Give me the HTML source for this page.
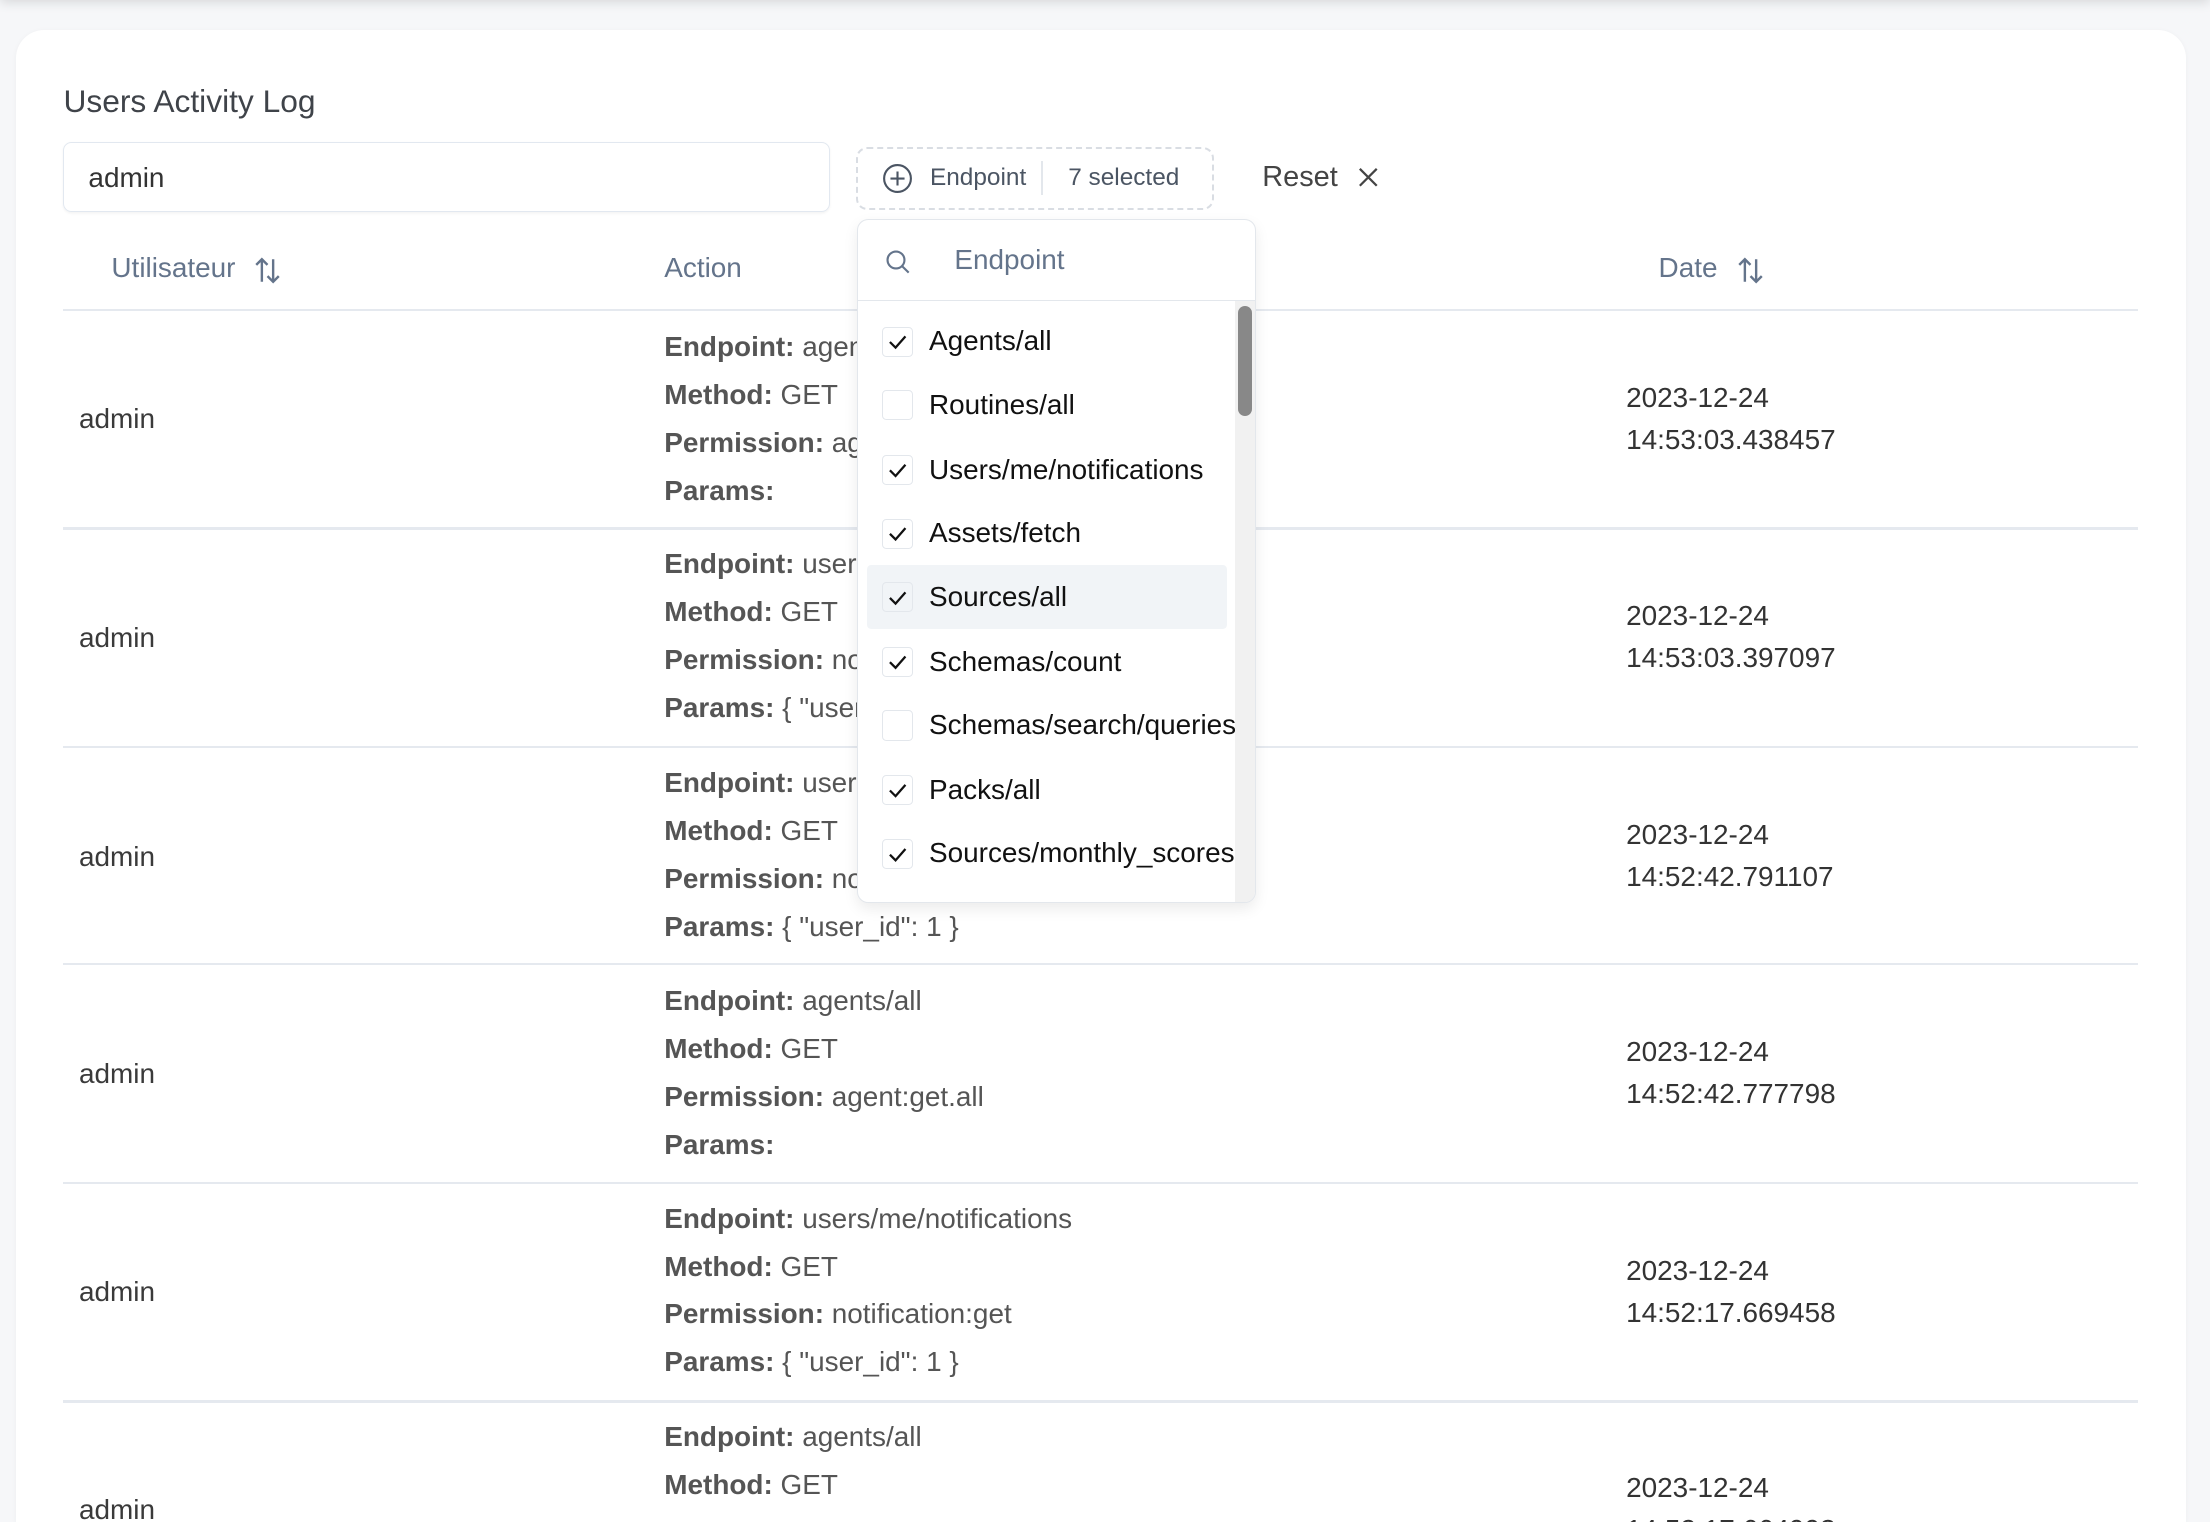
<!DOCTYPE html>
<html><head><meta charset="utf-8"><style>
html,body{margin:0;padding:0;}
body{width:2210px;height:1522px;overflow:hidden;background:#f6f7f9;font-family:"Liberation Sans",Arial,sans-serif;}
#w{zoom:1.41034;width:1567px;height:1079px;position:relative;overflow:hidden;}
.topbar{position:absolute;left:0;top:-20px;width:1567px;height:20px;background:#fff;box-shadow:0 2px 8px rgba(0,0,0,.12);}
.card{position:absolute;left:11px;top:21px;width:1539px;height:1058px;background:#fff;border-radius:20px 20px 0 0;box-shadow:0 1px 4px rgba(0,0,0,.04);}
.abs{position:absolute;white-space:nowrap;}
.title{left:45px;top:59px;font-size:22.5px;color:#3f4349;}
.input{left:45px;top:101px;width:542px;height:48px;border:1px solid #e2e8f0;border-radius:6px;box-shadow:0 1px 2px rgba(0,0,0,.05);}
.input span{position:absolute;left:17px;top:13px;font-size:19.8px;color:#333;}
.btn{left:607px;top:104px;width:251px;height:42px;border:1.5px dashed #d9dde3;border-radius:8px;font-size:17.3px;color:#4b5563;}
.hdr{font-size:19.8px;color:#64748b;top:179px;}
.line{position:absolute;left:45px;width:1471px;height:1.5px;background:#e5e9ef;}
.user{font-size:19.8px;color:#3a3a3a;left:56px;}
.act{left:471px;font-size:19.8px;color:#555;line-height:34px;}
.act b{color:#555;}
.date{left:1153px;font-size:19.8px;color:#333;line-height:30px;}
.dd{left:608px;top:155px;width:281px;height:484px;background:#fff;border:1px solid #e3e7ec;border-radius:8px;box-shadow:0 4px 10px rgba(0,0,0,.08);overflow:hidden;}
.item{position:absolute;left:0;width:267px;height:45px;overflow:hidden;}
.cb{position:absolute;left:17px;top:12px;width:20px;height:20px;border:1px solid #e3e7ec;border-radius:3px;background:#fff;}
.item .t{position:absolute;left:50px;top:11px;font-size:19.8px;color:#111;white-space:nowrap;}
</style></head><body><div id="w">
<div class="topbar"></div>
<div class="card"></div>
<div class="abs title">Users Activity Log</div>
<div class="abs input"><span>admin</span></div>
<div class="abs btn">
 <svg style="position:absolute;left:17px;top:10px" width="22" height="22" viewBox="0 0 22 22" fill="none" stroke="#4b5563" stroke-width="1.5"><circle cx="11" cy="11" r="9.5"/><path d="M11 6v10M6 11h10"/></svg>
 <span style="position:absolute;left:51px;top:11px">Endpoint</span>
 <span style="position:absolute;left:130px;top:9px;width:1px;height:24px;background:#e3e7ec"></span>
 <span style="position:absolute;left:149px;top:11px">7 selected</span>
</div>
<div class="abs" style="left:895px;top:114px;font-size:20.5px;color:#444">Reset</div>
<svg class="abs" style="left:962px;top:118px" width="16" height="16" viewBox="0 0 16 16" stroke="#444" stroke-width="1.6"><path d="M2 2l12 12M14 2L2 14"/></svg>

<div class="abs hdr" style="left:79px">Utilisateur</div>
<svg class="abs" style="left:179px;top:181px" width="22" height="22" viewBox="0 0 22 22" fill="none" stroke="#64748b" stroke-width="1.7"><path d="M7 19V3M3 7l4-4 4 4M15 3v16M11 15l4 4 4-4"/></svg>
<div class="abs hdr" style="left:471px">Action</div>
<div class="abs hdr" style="left:1176px">Date</div>
<svg class="abs" style="left:1230px;top:181px" width="22" height="22" viewBox="0 0 22 22" fill="none" stroke="#64748b" stroke-width="1.7"><path d="M7 19V3M3 7l4-4 4 4M15 3v16M11 15l4 4 4-4"/></svg>
<div class="line" style="top:219px"></div>
<div class="line" style="top:374px"></div>
<div class="line" style="top:529px"></div>
<div class="line" style="top:683px"></div>
<div class="line" style="top:838px"></div>
<div class="line" style="top:993px"></div>

<div class="abs user" style="top:286px">admin</div>
<div class="abs act" style="top:229px"><b>Endpoint:</b> agents/all<br><b>Method:</b> GET<br><b>Permission:</b> agent:get.all<br><b>Params:</b></div>
<div class="abs date" style="top:267px">2023-12-24<br>14:53:03.438457</div>

<div class="abs user" style="top:441px">admin</div>
<div class="abs act" style="top:383px"><b>Endpoint:</b> users/me/notifications<br><b>Method:</b> GET<br><b>Permission:</b> notification:get<br><b>Params:</b> { "user_id": 1 }</div>
<div class="abs date" style="top:422px">2023-12-24<br>14:53:03.397097</div>

<div class="abs user" style="top:596px">admin</div>
<div class="abs act" style="top:538px"><b>Endpoint:</b> users/me/notifications<br><b>Method:</b> GET<br><b>Permission:</b> notification:get<br><b>Params:</b> { "user_id": 1 }</div>
<div class="abs date" style="top:577px">2023-12-24<br>14:52:42.791107</div>

<div class="abs user" style="top:750px">admin</div>
<div class="abs act" style="top:693px"><b>Endpoint:</b> agents/all<br><b>Method:</b> GET<br><b>Permission:</b> agent:get.all<br><b>Params:</b></div>
<div class="abs date" style="top:731px">2023-12-24<br>14:52:42.777798</div>

<div class="abs user" style="top:905px">admin</div>
<div class="abs act" style="top:847px"><b>Endpoint:</b> users/me/notifications<br><b>Method:</b> GET<br><b>Permission:</b> notification:get<br><b>Params:</b> { "user_id": 1 }</div>
<div class="abs date" style="top:886px">2023-12-24<br>14:52:17.669458</div>

<div class="abs user" style="top:1059px">admin</div>
<div class="abs act" style="top:1002px"><b>Endpoint:</b> agents/all<br><b>Method:</b> GET</div>
<div class="abs date" style="top:1040px">2023-12-24<br>14:52:17.664993</div>

<div class="abs dd">
 <svg style="position:absolute;left:18px;top:20px" width="20" height="20" viewBox="0 0 20 20" fill="none" stroke="#64748b" stroke-width="1.5"><circle cx="8.5" cy="8.5" r="6"/><path d="M13 13l4.5 4.5"/></svg>
 <div style="position:absolute;left:68px;top:17px;font-size:19.8px;color:#64748b">Endpoint</div>
 <div style="position:absolute;left:0;top:57px;width:100%;height:1px;background:#e3e7ec"></div>
 <div style="position:absolute;left:6px;top:245px;width:255px;height:45px;background:#f1f4f7;border-radius:3px"></div>
 <div class="item" style="top:64px"><div class="cb"></div><div class="t">Agents/all</div></div>
 <div class="item" style="top:109px"><div class="cb"></div><div class="t">Routines/all</div></div>
 <div class="item" style="top:155px"><div class="cb"></div><div class="t">Users/me/notifications</div></div>
 <div class="item" style="top:200px"><div class="cb"></div><div class="t">Assets/fetch</div></div>
 <div class="item" style="top:245px;background:transparent"><div class="cb" style="background:transparent"></div><div class="t">Sources/all</div></div>
 <div class="item" style="top:291px"><div class="cb"></div><div class="t">Schemas/count</div></div>
 <div class="item" style="top:336px"><div class="cb"></div><div class="t">Schemas/search/queries</div></div>
 <div class="item" style="top:382px"><div class="cb"></div><div class="t">Packs/all</div></div>
 <div class="item" style="top:427px"><div class="cb"></div><div class="t">Sources/monthly_scores</div></div>
 <div style="position:absolute;left:267px;top:58px;width:14px;height:426px;background:#f1f1f1"></div>
 <div style="position:absolute;left:269px;top:61px;width:10px;height:78px;background:#888;border-radius:5px"></div>
</div>
<svg class="abs" style="left:0;top:0;pointer-events:none" width="1567" height="1080" fill="none" stroke="#111" stroke-width="1.6">
 <path d="M631 242.5l4 4 7-8"/>
 <path d="M631 333.5l4 4 7-8"/>
 <path d="M631 378.5l4 4 7-8"/>
 <path d="M631 424l4 4 7-8"/>
 <path d="M631 469.5l4 4 7-8"/>
 <path d="M631 560.5l4 4 7-8"/>
 <path d="M631 606l4 4 7-8"/>
</svg>
</div></body></html>
